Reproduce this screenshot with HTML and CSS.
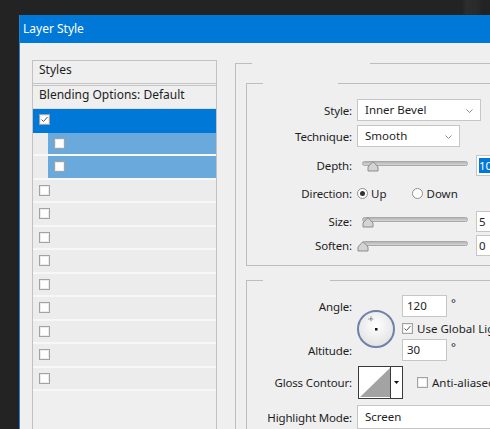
FILE: index.html
```html
<!DOCTYPE html>
<html lang="en">
<head>
    <meta charset="UTF-8">
    <title>Layer Style</title>
    <link rel="stylesheet" href="styles.css">
</head>
<body>
<div id="desk">
    <div id="dlg">
        <div id="ttl">Layer Style</div>
        <div id="dbody">
            <!-- styles list -->
            <div id="list">
                <div class="hdr">Styles</div>
                <div class="blend">Blending Options: Default</div>
                <div class="row sel">
                    <span class="cb"><svg width="9" height="9" viewBox="0 0 9 9"><path d="M1.5 4.5 L3.5 6.5 L7.5 2" fill="none" stroke="#555" stroke-width="1"/></svg></span>
                </div>
                <div class="row sub"><div class="fill"><span class="cb"></span></div></div>
                <div class="row sub"><div class="fill"><span class="cb"></span></div></div>
                <div class="row"><span class="cb"></span></div>
                <div class="row"><span class="cb"></span></div>
                <div class="row"><span class="cb"></span></div>
                <div class="row"><span class="cb"></span></div>
                <div class="row"><span class="cb"></span></div>
                <div class="row"><span class="cb"></span></div>
                <div class="row"><span class="cb"></span></div>
                <div class="row"><span class="cb"></span></div>
                <div class="row"><span class="cb"></span></div>
            </div>

            <!-- settings -->
            <div id="outer">
                <div class="gtop"></div>
                <div id="outerIn">
                    <div class="grp" id="bevel">
                        <div class="gtop"></div>
                        <div class="frm">
                            <div class="line" id="lStyle">
                                <span class="lbl">Style:</span>
                                <div class="drop" id="dStyle">Inner Bevel<svg class="chev" width="7" height="4" viewBox="0 0 7 4"><path d="M0.5 0.5 L3.5 3.5 L6.5 0.5" fill="none" stroke="#8a8a8a"/></svg></div>
                            </div>
                            <div class="line" id="lTech">
                                <span class="lbl">Technique:</span>
                                <div class="drop" id="dTech">Smooth<svg class="chev" width="7" height="4" viewBox="0 0 7 4"><path d="M0.5 0.5 L3.5 3.5 L6.5 0.5" fill="none" stroke="#8a8a8a"/></svg></div>
                            </div>
                            <div class="line" id="lDepth">
                                <span class="lbl">Depth:</span>
                                <div class="slider">
                                    <div class="track"></div>
                                    <svg class="thumb" style="left:5px" width="12" height="12" viewBox="0 0 12 12"><path d="M1 11 L1 7 L5 2.5 Q6 1.5 7 2.5 L11 7 L11 11 Z" fill="#d4d4d4" stroke="#8c8c8c"/></svg>
                                </div>
                                <div class="num"><span class="selTxt">10</span></div>
                            </div>
                            <div class="line" id="lDir">
                                <span class="lbl">Direction:</span>
                                <span class="radio on"></span><span class="rtxt">Up</span>
                                <span class="radio" id="rDown"></span><span class="rtxt">Down</span>
                            </div>
                            <div class="line" id="lSize">
                                <span class="lbl">Size:</span>
                                <div class="slider">
                                    <div class="track"></div>
                                    <svg class="thumb" style="left:0px" width="12" height="12" viewBox="0 0 12 12"><path d="M1 11 L1 7 L5 2.5 Q6 1.5 7 2.5 L11 7 L11 11 Z" fill="#d4d4d4" stroke="#8c8c8c"/></svg>
                                </div>
                                <div class="num">5</div>
                            </div>
                            <div class="line" id="lSoften">
                                <span class="lbl">Soften:</span>
                                <div class="slider">
                                    <div class="track"></div>
                                    <svg class="thumb" style="left:-5px" width="12" height="12" viewBox="0 0 12 12"><path d="M1 11 L1 7 L5 2.5 Q6 1.5 7 2.5 L11 7 L11 11 Z" fill="#d4d4d4" stroke="#8c8c8c"/></svg>
                                </div>
                                <div class="num">0</div>
                            </div>
                        </div>
                    </div>

                    <div class="grp" id="shading">
                        <div class="gtop"></div>
                        <div class="frm">
                            <div id="angleBox">
                                <span class="lbl">Angle:</span>
                                <div id="dial">
                                    <svg width="40" height="40" viewBox="0 0 40 40">
                                        <defs>
                                            <radialGradient id="dg" cx="50%" cy="40%" r="60%">
                                                <stop offset="0" stop-color="#ffffff"/>
                                                <stop offset="1" stop-color="#e2e2e2"/>
                                            </radialGradient>
                                        </defs>
                                        <circle cx="20" cy="20" r="18" fill="url(#dg)" stroke="#6f82aa" stroke-width="2"/>
                                        <path d="M15 7.5 V12.5 M12.5 10 H17.5" stroke="#333" stroke-width="0.8" stroke-dasharray="1 0.6"/>
                                        <rect x="19" y="19" width="2.5" height="2.5" fill="#111"/>
                                    </svg>
                                </div>
                                <div class="ctl"><div class="inp">120</div><span class="deg">°</span></div>
                                <span class="lbl"></span>
                                <div class="ctl">
                                    <span class="chk"><svg width="9" height="9" viewBox="0 0 9 9"><path d="M1.5 4.5 L3.5 6.5 L7.5 2" fill="none" stroke="#555" stroke-width="1"/></svg></span>
                                    <span class="ctxt">Use Global Light</span>
                                </div>
                                <span class="lbl">Altitude:</span>
                                <div class="ctl"><div class="inp">30</div><span class="deg">°</span></div>
                            </div>
                            <div class="line" id="lGloss">
                                <span class="lbl">Gloss Contour:</span>
                                <svg id="contour" width="45" height="33" viewBox="0 0 45 33">
                                    <rect x="0.5" y="0.5" width="44" height="32" fill="#fff" stroke="#3a3a3a"/>
                                    <polygon points="2,31 32,2 32,31" fill="#a3a3a3"/>
                                    <line x1="32.5" y1="1" x2="32.5" y2="32" stroke="#3a3a3a"/>
                                    <polygon points="36,15 41,15 38.5,18" fill="#111"/>
                                </svg>
                                <span class="chk" id="anti"></span>
                                <span class="ctxt">Anti-aliased</span>
                            </div>
                            <div class="line" id="lHigh">
                                <span class="lbl">Highlight Mode:</span>
                                <div class="drop" id="dHigh">Screen</div>
                            </div>
                        </div>
                    </div>
                </div>
            </div>
        </div>
    </div>
</div>
</body>
</html>
```

FILE: styles.css
```css
*{
    box-sizing: border-box;
}
html,body{
    margin: 0;
    height: 100%;
    overflow: hidden;
}
body{
    font-family: "Noto Sans", "Open Sans", sans-serif;
    font-size: 11.5px;
    color: #1e1e1e;
}
#desk{
    height: 100%;
    padding: 15px 0 0 19px;
    background: linear-gradient(90deg, #232323 462px, #2d2d2d 466px, #2a2a2a 478px, #232323 482px);
}
#dlg{
    height: 100%;
    width: 520px;
    background: #efefef;
    border-left: 1px solid #2a7fd0;
}
#ttl{
    height: 28px;
    line-height: 28px;
    padding-left: 3px;
    background: #0078d7;
    color: #fff;
    font-size: 12px;
}
#dbody{
    display: flex;
    height: 100%;
    padding: 17px 0 0 12px;
}

/* list */
#list{
    width: 185px;
    flex: none;
    border: 1px solid #c2c2c2;
    border-bottom: none;
    font-size: 12px;
}
.hdr{
    height: 23px;
    line-height: 18px;
    padding-left: 6px;
    border-bottom: 1px solid #c4c4c4;
}
.blend{
    height: 24px;
    margin-top: 1px;
    line-height: 17px;
    padding-left: 6px;
    border-top: 1px solid #c4c4c4;
    border-bottom: 1px solid #dcdcdc;
}
.row{
    height: 23.5px;
    display: flex;
    align-items: center;
    padding-left: 6px;
    background: #ececec;
    border-bottom: 2px solid #f7f7f7;
}
.row.sel{
    background: #0078d7;
    border-bottom-color: #0078d7;
}
.row.sub{
    padding-left: 15px;
    align-items: stretch;
}
.fill{
    flex: 1;
    display: flex;
    align-items: center;
    padding-left: 6px;
    background: #6aa9dc;
}
.cb,.chk{
    width: 11px;
    height: 11px;
    flex: none;
    display: inline-flex;
    align-items: center;
    justify-content: center;
    background: #fff;
    border: 1px solid #a2a2a2;
    box-shadow: inset 0 0 0 1px #ececec;
}
.cb svg,.chk svg{
    display: block;
}

/* group boxes */
#outer{
    flex: 1;
    margin: 3px 0 0 18px;
    border-left: 1px solid #bdbdbd;
}
.gtop{
    display: flex;
    height: 1px;
    margin-left: -1px;
}
.gtop::before,.gtop::after{
    content: '';
    background: #bdbdbd;
}
.gtop::before{
    width: 17px;
}
.gtop::after{
    flex: 1;
}
#outer > .gtop::after{
    margin-left: 118px;
}
#bevel > .gtop::after{
    margin-left: 75px;
}
#shading > .gtop::after{
    margin-left: 67px;
}
#outerIn{
    padding: 19px 0 0 10px;
}
.grp{
    border-left: 1px solid #bdbdbd;
}
#bevel{
    border-bottom: 1px solid #bdbdbd;
}
#bevel .frm{
    padding: 15px 0 9px;
}
#shading{
    margin-top: 14px;
}
#shading .frm{
    padding-top: 14px;
}

/* form rows */
.line{
    display: flex;
    align-items: center;
    height: 22px;
}
.lbl{
    width: 110px;
    flex: none;
    padding-right: 5px;
    text-align: right;
    letter-spacing: -0.15px;
}
#lTech{ margin-top: 4px; }
#lDepth{ margin-top: 7px; }
#lDir{ margin-top: 6px; }
#lSize{ margin-top: 6px; }
#lSoften{ margin-top: 2px; }
#lGloss{ margin-top: 5px; height: 33px; }
#lHigh{ margin-top: 6px; height: 24px; }

.drop{
    position: relative;
    height: 22px;
    line-height: 20px;
    padding-left: 7px;
    background: #fff;
    border: 1px solid #c6c6c6;
}
#dStyle{ width: 124px; }
#dTech{ width: 103px; }
#dHigh{ width: 160px; height: 24px; line-height: 22px; }
.chev{
    position: absolute;
    right: 7px;
    top: 9px;
}

.slider{
    position: relative;
    width: 106px;
    height: 22px;
    margin-left: 5px;
}
.track{
    position: absolute;
    left: 0;
    right: 0;
    top: 7px;
    height: 5px;
    border-radius: 3px;
    border: 1px solid #a8a8a8;
    background: linear-gradient(#b5b5b5, #d6d6d6);
}
.thumb{
    position: absolute;
    top: 6px;
}
.num{
    width: 40px;
    height: 21px;
    line-height: 19px;
    margin-left: 8px;
    padding-left: 2px;
    background: #fff;
    border: 1px solid #c6c6c6;
}
.selTxt{
    background: #0078d7;
    color: #fff;
}

.radio{
    width: 11px;
    height: 11px;
    border-radius: 50%;
    border: 1px solid #8e8e8e;
    background: #fff;
    display: inline-flex;
    align-items: center;
    justify-content: center;
}
.radio.on::after{
    content: '';
    width: 5px;
    height: 5px;
    border-radius: 50%;
    background: #333;
}
.rtxt{
    margin-left: 3px;
}
#rDown{
    margin-left: 26px;
}

/* shading */
#angleBox{
    display: grid;
    grid-template-columns: 110px 45px 1fr;
    grid-template-rows: 22px 22px 22px;
    align-items: center;
}
#dial{
    grid-column: 2;
    grid-row: 1 / 4;
    margin-left: -1px;
    margin-top: 2px;
}
#dial svg{
    display: block;
}
.ctl{
    display: flex;
    align-items: center;
}
.inp{
    width: 45px;
    height: 22px;
    line-height: 20px;
    padding-left: 4px;
    background: #fff;
    border: 1px solid #c6c6c6;
}
.deg{
    margin-left: 4px;
    margin-top: -8px;
}
.ctxt{
    margin-left: 4px;
    white-space: nowrap;
}
#contour{
    display: block;
    flex: none;
    margin-left: 1px;
}
#anti{
    margin-left: 14px;
}
```
